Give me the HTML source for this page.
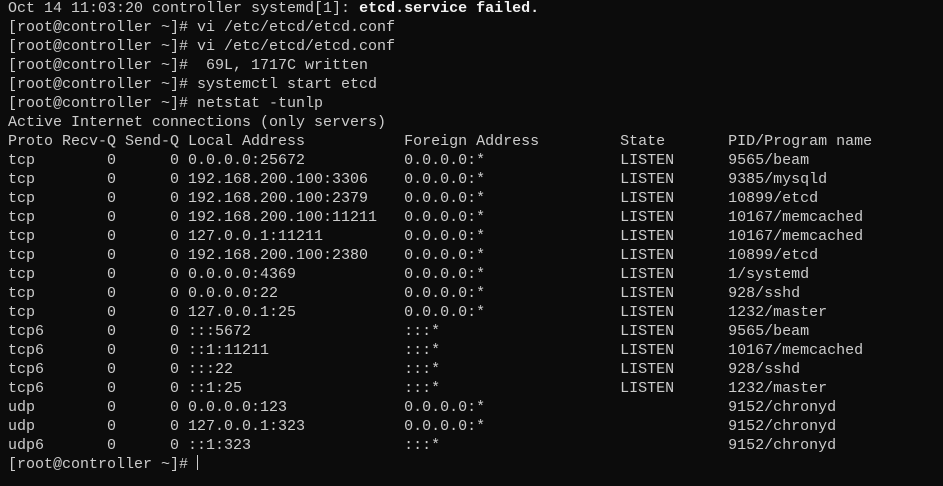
<!DOCTYPE html>
<html><head><meta charset="utf-8"><style>
html,body{margin:0;padding:0;background:#0c0c0c;width:943px;height:486px;overflow:hidden}
pre{position:absolute;left:8px;top:-1px;margin:0;font-family:"Liberation Mono","DejaVu Sans Mono",monospace;font-size:15px;line-height:19px;color:#cccccc}
b{color:#f2f2f2}
.cur{display:inline-block;width:1px;height:15px;background:#ccc;vertical-align:-2px}
</style></head><body><pre>Oct 14 11:03:20 controller systemd[1]: <b>etcd.service failed.</b>
[root@controller ~]# vi /etc/etcd/etcd.conf
[root@controller ~]# vi /etc/etcd/etcd.conf
[root@controller ~]#  69L, 1717C written
[root@controller ~]# systemctl start etcd
[root@controller ~]# netstat -tunlp
Active Internet connections (only servers)
Proto Recv-Q Send-Q Local Address           Foreign Address         State       PID/Program name
tcp        0      0 0.0.0.0:25672           0.0.0.0:*               LISTEN      9565/beam
tcp        0      0 192.168.200.100:3306    0.0.0.0:*               LISTEN      9385/mysqld
tcp        0      0 192.168.200.100:2379    0.0.0.0:*               LISTEN      10899/etcd
tcp        0      0 192.168.200.100:11211   0.0.0.0:*               LISTEN      10167/memcached
tcp        0      0 127.0.0.1:11211         0.0.0.0:*               LISTEN      10167/memcached
tcp        0      0 192.168.200.100:2380    0.0.0.0:*               LISTEN      10899/etcd
tcp        0      0 0.0.0.0:4369            0.0.0.0:*               LISTEN      1/systemd
tcp        0      0 0.0.0.0:22              0.0.0.0:*               LISTEN      928/sshd
tcp        0      0 127.0.0.1:25            0.0.0.0:*               LISTEN      1232/master
tcp6       0      0 :::5672                 :::*                    LISTEN      9565/beam
tcp6       0      0 ::1:11211               :::*                    LISTEN      10167/memcached
tcp6       0      0 :::22                   :::*                    LISTEN      928/sshd
tcp6       0      0 ::1:25                  :::*                    LISTEN      1232/master
udp        0      0 0.0.0.0:123             0.0.0.0:*                           9152/chronyd
udp        0      0 127.0.0.1:323           0.0.0.0:*                           9152/chronyd
udp6       0      0 ::1:323                 :::*                                9152/chronyd
[root@controller ~]# <span class="cur"></span></pre></body></html>
